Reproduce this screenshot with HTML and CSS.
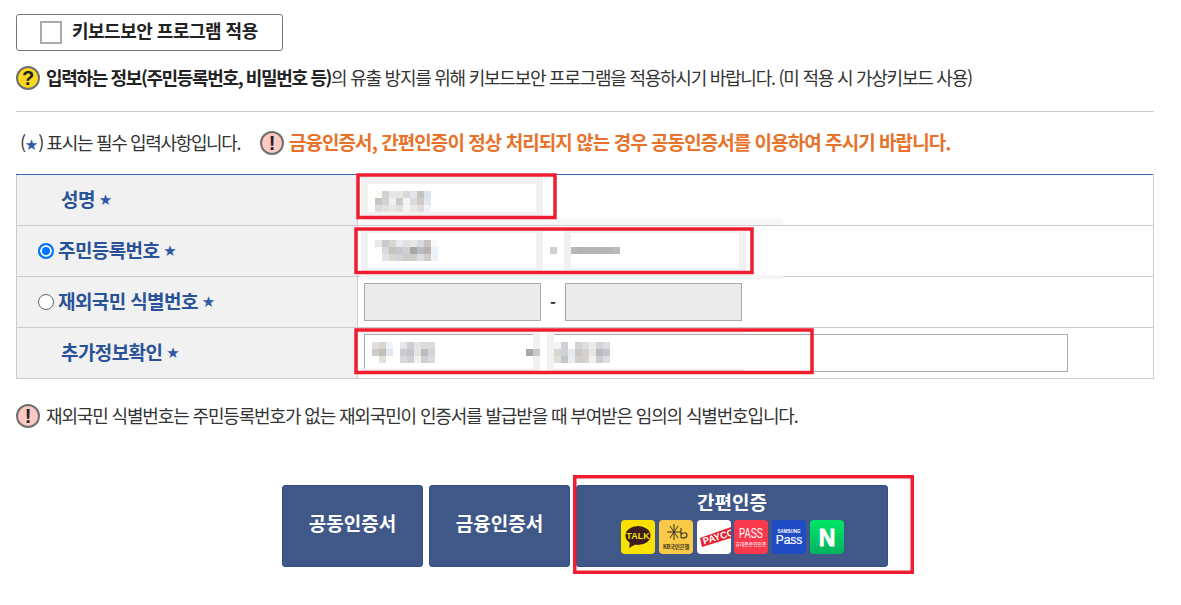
FILE: index.html
```html
<!DOCTYPE html>
<html lang="ko">
<head>
  <meta charset="UTF-8">
  <title>본인확인</title>
  <link rel="stylesheet" href="styles.css">
</head>
<body>
  <div class="page">
    <label class="keyboard-btn">
      <span class="check-box"></span>
      <span>키보드보안 프로그램 적용</span>
    </label>

    <p class="notice first">
      <span class="mark mark-q">?</span>
      <span><b>입력하는 정보(주민등록번호, 비밀번호 등)</b>의 유출 방지를 위해 키보드보안 프로그램을 적용하시기 바랍니다. (미 적용 시 가상키보드 사용)</span>
    </p>

    <hr class="line">

    <div class="required">
      <span class="required-text">(<i class="star">★</i>) 표시는 필수 입력사항입니다.</span>
      <span class="mark mark-ex">!</span>
      <strong class="warn">금융인증서, 간편인증이 정상 처리되지 않는 경우 공동인증서를 이용하여 주시기 바랍니다.</strong>
    </div>

    <table class="form-table">
      <tr>
        <th><span class="label plain">성명<i class="star">★</i></span></th>
        <td><input class="field" type="text"></td>
      </tr>
      <tr>
        <th><span class="label"><span class="radio on"></span>주민등록번호<i class="star">★</i></span></th>
        <td>
          <input class="field" type="text"><span class="dash">-</span><input class="field" type="text">
        </td>
      </tr>
      <tr>
        <th><span class="label"><span class="radio"></span>재외국민 식별번호<i class="star">★</i></span></th>
        <td>
          <input class="field off" type="text" disabled><span class="dash">-</span><input class="field off" type="text" disabled>
        </td>
      </tr>
      <tr>
        <th><span class="label plain">추가정보확인<i class="star">★</i></span></th>
        <td><input class="field wide" type="text"></td>
      </tr>
    </table>

    <p class="notice second">
      <span class="mark mark-ex">!</span>
      <span>재외국민 식별번호는 주민등록번호가 없는 재외국민이 인증서를 발급받을 때 부여받은 임의의 식별번호입니다.</span>
    </p>

    <div class="buttons">
      <a class="auth-btn small">공동인증서</a>
      <a class="auth-btn small">금융인증서</a>
      <a class="auth-btn simple">
        <span>간편인증</span>
        <span class="logos">
          <svg class="logo" viewBox="0 0 34 34"><rect width="34" height="34" fill="#fae100"/><ellipse cx="17" cy="15.500" rx="12.500" ry="9.500" fill="#3c1e1e"/><path d="M9 22l-1 6 7-4z" fill="#3c1e1e"/><text x="17" y="19" class="t-talk">TALK</text></svg>
          <svg class="logo" viewBox="0 0 34 34"><rect width="34" height="34" fill="#f8ca47"/><path d="M11 6l8 12M19 6l-8 12M8 12h14M15 4v16" stroke="#3a3320" stroke-width="1" fill="none"/><path d="M22 8v10M22 15c1-3 6-3 6 0s-5 4-6 2" stroke="#3a3320" stroke-width="1.100" fill="none"/><text x="17" y="29" class="t-kb">KB국민은행</text></svg>
          <svg class="logo" viewBox="0 0 34 34"><rect width="34" height="34" fill="#fff"/><path d="M3 18L34 7v11L5 27z" fill="#e8212f"/><text x="7" y="24.500" class="t-payco" transform="rotate(-17 7 24.500)">PAYCO</text></svg>
          <svg class="logo" viewBox="0 0 34 34"><rect width="34" height="34" fill="#f8394c"/><text class="t-pass" transform="translate(17 18) scale(.62 1)">PASS</text><text x="17" y="25.500" class="t-tiny">휴대폰본인인증</text></svg>
          <svg class="logo" viewBox="0 0 34 34"><rect width="34" height="34" fill="#1f4cc4"/><text x="17" y="13" class="t-sam">SAMSUNG</text><text x="17" y="24" class="t-sp">Pass</text></svg>
          <svg class="logo" viewBox="0 0 34 34"><defs><linearGradient id="ng" x1="0" y1="0" x2="0" y2="1"><stop offset="0" stop-color="#00e765"/><stop offset="1" stop-color="#05b160"/></linearGradient></defs><rect width="34" height="34" fill="url(#ng)"/><text x="17" y="25.500" class="t-n">N</text></svg>
        </span>
      </a>
    </div>

    <!-- 가림 처리 + 빨간 표시 -->
    <svg class="cover" width="1181" height="605" viewBox="0 0 1181 605">
      <rect x="361" y="219" width="422" height="6" fill="#f7f7f7"/>
      <rect x="361" y="275" width="422" height="4" fill="#f5f5f5"/>

      <rect x="361" y="177" width="182" height="40" fill="#f1f1f1"/>
      <rect x="368" y="184" width="168" height="28" fill="#fff"/>

      <rect x="355" y="227" width="391" height="48" fill="#fff"/>
      <rect x="361" y="228" width="182" height="45" fill="#f1f1f1"/>
      <rect x="368" y="233" width="168" height="35" fill="#fff"/>
      <rect x="564" y="228" width="182" height="45" fill="#f1f1f1"/>
      <rect x="571" y="233" width="168" height="35" fill="#fff"/>

      <rect x="361" y="329" width="384" height="5" fill="#f4f4f4"/>
      <rect x="361" y="369" width="384" height="4" fill="#f1eeee"/>
      <rect x="533" y="334" width="21" height="38" fill="#f1f1f1"/>
      <rect x="540" y="329" width="7" height="44" fill="#fff"/>

      <g>
        <rect x="375" y="191" width="7" height="7" fill="#fbfaf6"/><rect x="375" y="198" width="7" height="7" fill="#c6c5c0"/><rect x="375" y="205" width="7" height="7" fill="#dcdcda"/>
        <rect x="382" y="191" width="7" height="7" fill="#d3d2d0"/><rect x="382" y="198" width="7" height="7" fill="#d0d2d4"/><rect x="382" y="205" width="7" height="7" fill="#e0e2e3"/>
        <rect x="389" y="191" width="7" height="7" fill="#e6e7ea"/><rect x="389" y="198" width="7" height="7" fill="#f0efec"/><rect x="389" y="205" width="7" height="7" fill="#eae8e3"/>
        <rect x="396" y="191" width="7" height="7" fill="#e9e6df"/><rect x="396" y="198" width="7" height="7" fill="#c9cbcb"/><rect x="396" y="205" width="7" height="7" fill="#e0e0de"/>
        <rect x="403" y="191" width="7" height="7" fill="#d5d9db"/><rect x="403" y="198" width="7" height="7" fill="#f3f3f2"/><rect x="403" y="205" width="7" height="7" fill="#f3f4f6"/>
        <rect x="410" y="191" width="7" height="7" fill="#e2e4e7"/><rect x="410" y="198" width="7" height="7" fill="#d9dadb"/><rect x="410" y="205" width="7" height="7" fill="#e9e9e6"/>
        <rect x="417" y="191" width="7" height="7" fill="#c5c3bf"/><rect x="417" y="198" width="7" height="7" fill="#cfccc7"/><rect x="417" y="205" width="7" height="7" fill="#e0dfdb"/>
        <rect x="424" y="191" width="7" height="7" fill="#dbe2f0"/><rect x="424" y="198" width="7" height="7" fill="#e3e7f0"/><rect x="424" y="205" width="7" height="7" fill="#f0f3f9"/>
      </g>
      <g>
        <rect x="375" y="240" width="7" height="7" fill="#ebe7e3"/><rect x="382" y="240" width="7" height="7" fill="#c9c9d0"/><rect x="389" y="240" width="7" height="7" fill="#d9d5d0"/><rect x="396" y="240" width="7" height="7" fill="#e8e9ec"/><rect x="403" y="240" width="7" height="7" fill="#dfe1e2"/><rect x="410" y="240" width="7" height="7" fill="#e9e7e1"/><rect x="417" y="240" width="7" height="7" fill="#d9dae0"/><rect x="424" y="240" width="7" height="7" fill="#c9c5be"/><rect x="431" y="240" width="7" height="7" fill="#f7f8fb"/>
        <rect x="382" y="247" width="7" height="7" fill="#d8d9dc"/><rect x="389" y="247" width="7" height="7" fill="#c7c3bd"/><rect x="396" y="247" width="7" height="7" fill="#c6c8cc"/><rect x="403" y="247" width="7" height="7" fill="#cfd0d3"/><rect x="410" y="247" width="7" height="7" fill="#aaa6a0"/><rect x="417" y="247" width="7" height="7" fill="#b8bcc4"/><rect x="424" y="247" width="7" height="7" fill="#b9b5ac"/><rect x="431" y="247" width="7" height="7" fill="#ecf0f7"/>
        <rect x="382" y="254" width="7" height="7" fill="#e3e4ea"/><rect x="389" y="254" width="7" height="7" fill="#d9d7d2"/><rect x="396" y="254" width="7" height="7" fill="#d3d4d8"/><rect x="403" y="254" width="7" height="7" fill="#cfccc8"/><rect x="410" y="254" width="7" height="7" fill="#d0cfcb"/><rect x="417" y="254" width="7" height="7" fill="#dddde2"/><rect x="424" y="254" width="7" height="7" fill="#d0cdc6"/><rect x="431" y="254" width="7" height="7" fill="#eff2f8"/>
      </g>
      <rect x="550" y="247" width="7" height="7" fill="#cfcfcf"/>
      <rect x="571" y="247" width="7" height="7" fill="#bcb7b2"/><rect x="578" y="247" width="7" height="7" fill="#b0b3b8"/><rect x="585" y="247" width="28" height="7" fill="#b5b5b5"/><rect x="613" y="247" width="7" height="7" fill="#bbbbbb"/>
      <g>
        <rect x="372" y="342" width="7" height="7" fill="#e1dfdb"/><rect x="379" y="342" width="7" height="7" fill="#d9d4cf"/><rect x="386" y="342" width="7" height="7" fill="#edf3fa"/>
        <rect x="372" y="349" width="7" height="7" fill="#cfcdca"/><rect x="379" y="349" width="7" height="7" fill="#c3bfb9"/><rect x="386" y="349" width="7" height="7" fill="#e0e7f1"/>
        <rect x="379" y="356" width="7" height="7" fill="#dfe3de"/>
        <rect x="400" y="342" width="7" height="7" fill="#e4e5e7"/><rect x="407" y="342" width="7" height="7" fill="#ccced1"/><rect x="414" y="342" width="7" height="7" fill="#e4e5e3"/><rect x="421" y="342" width="7" height="7" fill="#d8dadb"/><rect x="428" y="342" width="7" height="7" fill="#d9dbdc"/>
        <rect x="400" y="349" width="7" height="7" fill="#cacbcd"/><rect x="407" y="349" width="7" height="7" fill="#c3c5c9"/><rect x="414" y="349" width="7" height="7" fill="#e4e3df"/><rect x="421" y="349" width="7" height="7" fill="#b9bbbc"/><rect x="428" y="349" width="7" height="7" fill="#d4d6d6"/>
        <rect x="400" y="356" width="7" height="7" fill="#d8d8db"/><rect x="407" y="356" width="7" height="7" fill="#cccfd3"/><rect x="414" y="356" width="7" height="7" fill="#f4f1ec"/><rect x="421" y="356" width="7" height="7" fill="#cdcfd0"/><rect x="428" y="356" width="7" height="7" fill="#d9dadb"/>
      </g>
      <rect x="526" y="349" width="7" height="7" fill="#a8a8a8"/><rect x="533" y="349" width="7" height="7" fill="#c9c9c9"/>
      <g>
        <rect x="554" y="342" width="7" height="7" fill="#f5f3f0"/><rect x="561" y="342" width="7" height="7" fill="#cfd0d3"/><rect x="575" y="342" width="7" height="7" fill="#d5d4d2"/><rect x="582" y="342" width="7" height="7" fill="#dddee1"/><rect x="589" y="342" width="7" height="7" fill="#ecebe6"/><rect x="596" y="342" width="7" height="7" fill="#d3d4da"/><rect x="603" y="342" width="7" height="7" fill="#dddde3"/>
        <rect x="554" y="349" width="7" height="7" fill="#d9d5d1"/><rect x="561" y="349" width="7" height="7" fill="#d1d2d5"/><rect x="568" y="349" width="7" height="7" fill="#e5e8ee"/><rect x="575" y="349" width="7" height="7" fill="#cbc9c4"/><rect x="582" y="349" width="7" height="7" fill="#d2d1cf"/><rect x="589" y="349" width="7" height="7" fill="#e7e6e1"/><rect x="596" y="349" width="7" height="7" fill="#b9babd"/><rect x="603" y="349" width="7" height="7" fill="#c5c6cc"/>
        <rect x="554" y="356" width="7" height="7" fill="#e0dcd8"/><rect x="561" y="356" width="7" height="7" fill="#c5c6c8"/><rect x="568" y="356" width="7" height="7" fill="#e9ecf0"/><rect x="575" y="356" width="7" height="7" fill="#d2d0cb"/><rect x="582" y="356" width="7" height="7" fill="#d3d2cf"/><rect x="589" y="356" width="7" height="7" fill="#f1f0eb"/><rect x="596" y="356" width="7" height="7" fill="#cdcdd3"/><rect x="603" y="356" width="7" height="7" fill="#dddde3"/>
      </g>

      <g class="red">
        <rect x="358" y="175" width="197" height="42.500"/>
        <rect x="356" y="229" width="396" height="43.500"/>
        <rect x="356" y="330" width="456" height="42.500"/>
        <rect x="574.750" y="476.750" width="337.500" height="95.500"/>
      </g>
    </svg>
  </div>
</body>
</html>
```

FILE: styles.css
```css
* {
  margin: 0;
  padding: 0;
  box-sizing: border-box;
}
body {
  background-color: #fff;
  color: #333;
  font-family: "Noto Sans CJK KR", "Noto Sans", sans-serif;
  font-size: 16px;
}
.page {
  position: relative;
  width: 1181px;
  height: 605px;
  padding: 14px 27px 0 16px;
  overflow: hidden;
}
.keyboard-btn {
  display: flex;
  align-items: center;
  width: 267px;
  height: 37px;
  padding-left: 23px;
  border: 1px solid #777;
  border-radius: 3px;
  color: #222;
  font-size: 18px;
  font-weight: 700;
  letter-spacing: -0.5px;
}
.check-box {
  width: 22px;
  height: 23px;
  margin-right: 10px;
  border: 2px solid #aaa;
  background-color: #fff;
}
.keyboard-btn span:last-child {
  margin-top: -5px;
}
.notice {
  display: flex;
  align-items: center;
  height: 24px;
  font-size: 18px;
  white-space: nowrap;
}
.notice > span:last-child {
  margin-top: -2px;
}
.notice b {
  color: #222;
  letter-spacing: -1.35px;
}
.notice.first {
  margin-top: 15px;
  letter-spacing: -1.25px;
}
.notice.second {
  margin-top: 25px;
  letter-spacing: -1.15px;
}
.mark {
  display: flex;
  flex: none;
  align-items: center;
  justify-content: center;
  width: 24px;
  height: 24px;
  margin-right: 6px;
  border: 2px solid #6f6f6f;
  border-radius: 50%;
  color: #222;
  font-family: "Liberation Sans", sans-serif;
  font-size: 20px;
  font-weight: 700;
  letter-spacing: 0;
}
.mark-q {
  background-color: #fcd91e;
}
.mark-ex {
  background-color: #fdc9c5;
}
.line {
  height: 1px;
  margin-top: 21px;
  border: 0;
  background-color: #ccc;
}
.required {
  display: flex;
  align-items: center;
  height: 24px;
  margin-top: 19px;
  padding-left: 4px;
  white-space: nowrap;
}
.required-text {
  width: 240px;
  margin-top: -2px;
  font-size: 18px;
  letter-spacing: -1.35px;
}
.required .mark {
  margin-right: 5px;
}
.warn {
  margin-top: -3px;
  color: #e8722a;
  font-size: 19px;
  font-weight: 700;
  letter-spacing: -0.95px;
}
.star {
  color: #2f5aa6;
  font-family: "DejaVu Sans", sans-serif;
  font-size: 15px;
  font-style: normal;
  letter-spacing: 0;
}
.form-table {
  width: 1138px;
  margin-top: 19px;
  border-collapse: collapse;
  border-top: 1px solid #3a66ae;
}
.form-table tr {
  height: 51px;
}
.form-table th,
.form-table td {
  border: 1px solid #ccc;
  border-top-color: #ccc;
}
.form-table tr:first-child th,
.form-table tr:first-child td {
  border-top: 1px solid #3a66ae;
}
.form-table th {
  width: 341px;
  padding-left: 21px;
  background-color: #f1f1f1;
  color: #2a5298;
  font-size: 19px;
  font-weight: 700;
  letter-spacing: -0.6px;
  text-align: left;
}
.form-table td {
  padding-left: 6px;
  font-size: 0;
}
.label {
  display: flex;
  align-items: center;
  gap: 4px;
  height: 28px;
  margin-top: -2px;
  line-height: 24px;
  white-space: pre;
}
.label .star {
  margin-top: 2px;
}
.label.plain {
  padding-left: 24px;
  margin-left: -1px;
}
.radio {
  flex: none;
  width: 16px;
  height: 16px;
  margin-top: 2px;
  border: 1px solid #666;
  border-radius: 50%;
  background-color: #fff;
}
.radio.on {
  border: 2px solid #0075ff;
  box-shadow: inset 0 0 0 2px #fff;
  background-color: #0075ff;
}
.field {
  width: 177px;
  height: 38px;
  border: 1px solid #aaa;
  background-color: #fff;
  vertical-align: middle;
}
.field.off {
  background-color: #ebebeb;
}
.field.wide {
  width: 704px;
}
.dash {
  display: inline-block;
  width: 24px;
  color: #222;
  font-size: 16px;
  font-weight: 700;
  text-align: center;
  vertical-align: middle;
}
.buttons {
  display: flex;
  justify-content: center;
  gap: 6px;
  width: 1138px;
  margin-top: 57px;
}
.auth-btn {
  display: flex;
  flex-direction: column;
  align-items: center;
  justify-content: center;
  height: 82px;
  border: 1px solid #2f4f88;
  border-radius: 3px;
  background-color: #3f5888;
  color: #fff;
  font-size: 19px;
  font-weight: 700;
}
.auth-btn.small {
  width: 141px;
  padding-bottom: 7px;
}
.auth-btn.simple {
  width: 312px;
  justify-content: flex-start;
  padding-top: 3px;
  line-height: 26px;
}
.logos {
  display: flex;
  gap: 3.800px;
  margin-top: 5px;
  margin-left: 1px;
}
.logo {
  display: block;
  width: 34px;
  height: 34px;
  border-radius: 4px;
}
.cover {
  position: absolute;
  top: 0;
  left: 0;
  pointer-events: none;
}
.red rect {
  fill: none;
  stroke: #f01c30;
  stroke-width: 3.500;
}
.t-talk {
  fill: #fae100;
  font: 700 9px "Liberation Sans", sans-serif;
  text-anchor: middle;
}
.t-kb {
  fill: #3a3320;
  font: 700 5.500px "Noto Sans CJK KR", sans-serif;
  text-anchor: middle;
  letter-spacing: -0.3px;
}
.t-payco {
  fill: #fff;
  font: 700 9.500px "Liberation Sans", sans-serif;
}
.t-pass {
  fill: #fff;
  font: 400 15px "Liberation Sans", sans-serif;
  text-anchor: middle;
}
.t-tiny {
  fill: #ffdfe2;
  font: 500 4.800px "Noto Sans CJK KR", sans-serif;
  text-anchor: middle;
}
.t-sam {
  fill: #fff;
  font: 700 4.500px "Liberation Sans", sans-serif;
  text-anchor: middle;
}
.t-sp {
  fill: #fff;
  font: 400 12px "Liberation Sans", sans-serif;
  text-anchor: middle;
  stroke: #fff;
  stroke-width: 0.200;
}
.t-n {
  fill: #fff;
  font: 700 23px "Liberation Sans", sans-serif;
  text-anchor: middle;
  stroke: #fff;
  stroke-width: 0.800;
}
```
